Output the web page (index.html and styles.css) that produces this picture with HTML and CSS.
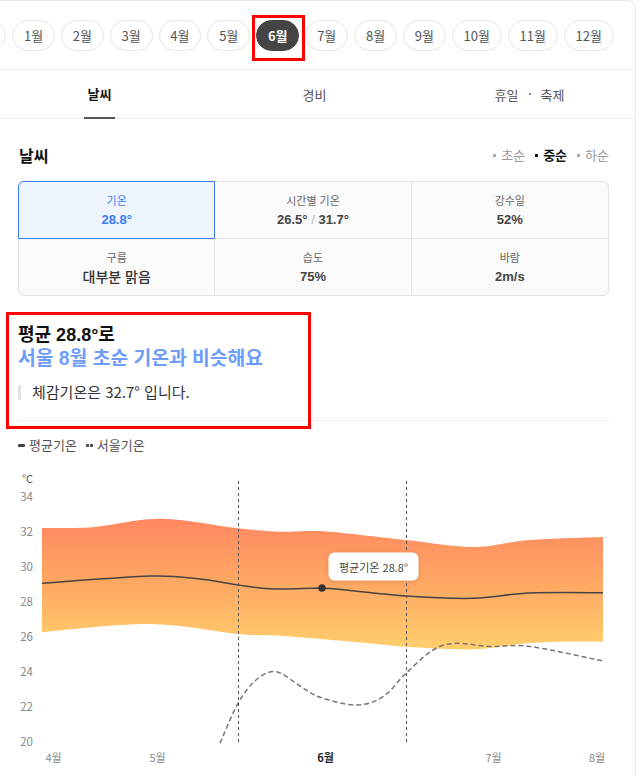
FILE: index.html
```html
<!DOCTYPE html>
<html lang="ko">
<head>
<meta charset="utf-8">
<title>날씨</title>
<link rel="stylesheet" href="styles.css">
</head>
<body>
<div class="page">
  <div class="monthbar">
    <div class="chips">
      <span class="chip chip-prev" aria-hidden="true"></span>
      <span class="chip">1월</span>
      <span class="chip">2월</span>
      <span class="chip">3월</span>
      <span class="chip">4월</span>
      <span class="chip">5월</span>
      <span class="chip active">6월</span>
      <span class="chip">7월</span>
      <span class="chip">8월</span>
      <span class="chip">9월</span>
      <span class="chip">10월</span>
      <span class="chip">11월</span>
      <span class="chip">12월</span>
    </div>
  </div>

  <nav class="tabs">
    <div class="tab"><span class="tab-label active">날씨</span></div>
    <div class="tab"><span class="tab-label">경비</span></div>
    <div class="tab"><span class="tab-label">휴일<span class="tab-dot"></span>축제</span></div>
  </nav>

  <section class="content">
    <div class="head-row">
      <h2 class="title">날씨</h2>
      <ul class="periods">
        <li class="period">초순</li>
        <li class="period on">중순</li>
        <li class="period">하순</li>
      </ul>
    </div>

    <div class="grid">
      <div class="cell selected"><span class="label">기온</span><span class="value">28.8°</span></div>
      <div class="cell"><span class="label">시간별 기온</span><span class="value">26.5° <span class="slash">/</span> 31.7°</span></div>
      <div class="cell tr"><span class="label">강수일</span><span class="value">52%</span></div>
      <div class="cell bl"><span class="label">구름</span><span class="value text">대부분 맑음</span></div>
      <div class="cell"><span class="label">습도</span><span class="value">75%</span></div>
      <div class="cell br"><span class="label">바람</span><span class="value">2m/s</span></div>
    </div>

    <div class="summary">
      <p class="sum-main">평균 28.8°로</p>
      <p class="sum-sub">서울 8월 초순 기온과 비슷해요</p>
      <p class="sum-note">체감기온은 32.7° 입니다.</p>
    </div>

    <div class="legend">
      <span class="legend-item"><span class="key key-solid"></span>평균기온</span>
      <span class="legend-item"><span class="key key-dash"><i></i><i></i></span>서울기온</span>
    </div>
  </section>

  <svg class="chart" width="635" height="310" viewBox="0 466 635 310" xmlns="http://www.w3.org/2000/svg">
    <defs>
      <linearGradient id="bandFill" x1="0" y1="518" x2="0" y2="650" gradientUnits="userSpaceOnUse">
        <stop offset="0" stop-color="#ff8761"/>
        <stop offset="0.5" stop-color="#ffa863"/>
        <stop offset="1" stop-color="#ffcf6c"/>
      </linearGradient>
      <filter id="tipShadow" x="-20%" y="-40%" width="140%" height="190%">
        <feDropShadow dx="0" dy="1" stdDeviation="2.2" flood-color="#000" flood-opacity="0.16"/>
      </filter>
    </defs>

    <text class="unit" x="33" y="478">°C</text>
    <g class="ylab">
      <text x="33" y="496">34</text>
      <text x="33" y="531">32</text>
      <text x="33" y="566">30</text>
      <text x="33" y="601">28</text>
      <text x="33" y="636">26</text>
      <text x="33" y="671">24</text>
      <text x="33" y="706">22</text>
      <text x="33" y="741">20</text>
    </g>

    <path class="band" d="M42,528 C50,527.9 72.8,528.3 90,527.5 C107.2,526.1 130,520.75 145,519.5 C160,518.25 164.5,518.5 180,520 C195.5,521.5 221.3,526.35 238,528.3 C254.7,530.25 266.3,531.25 280,531.7 C293.7,531.9 299,530.8 320,531 C341,532.4 380.5,537.3 406,540 C431.5,542.7 452.5,547 473,547 C493.5,547 507.3,541.7 529,540 C550.7,538.3 590.7,537.5 603,537 L603,641.7 C590.7,641.4 550.7,641.2 529,643.3 C507.3,644.6 493.5,648.7 473,649.3 C452.5,649.9 423.8,647.75 406,646.7 C388.2,645.65 385.3,644.7 366,643 C346.7,641.3 311.3,638 290,636.5 C268.7,635 261.3,636.1 238,634 C214.7,631.9 182.7,624.3 150,624 C117.3,623.7 60,630.7 42,632 Z"/>

    <path class="mean" d="M42,583.3 C60,582.1 123.7,576.7 150,576 C176.3,575.3 185.3,577.5 200,579 C214.7,580.5 225.5,583.3 238,585 C250.5,586.7 261,588.5 275,589 C289,589.5 300.2,588 322,588 C343.8,589.2 380.8,594.3 406,596 C431.2,597.7 452.5,598.8 473,598.3 C493.5,597.8 507.3,593.9 529,593 C550.7,592.1 590.7,592.7 603,592.7"/>

    <path class="seoul" d="M220,743.3 C223,736.6 232,713.85 238,703.3 C244,692.75 249.7,685.3 256,680 C262.3,674.7 268.7,670.7 276,671.7 C283.3,672.7 292.7,681.7 300,686 C307.3,690.3 310.7,694.1 320,697.3 C329.3,700.5 345.5,705.1 356,705 C366.5,704.9 374.7,702 383,696.7 C391.3,691.4 397.7,681.1 406,673.3 C414.3,665.5 424.7,655 433,650 C441.3,645 446.5,643.9 456,643.3 C465.5,642.7 477.7,646 490,646.5 C502.3,647 511.2,644.1 530,646.5 C548.8,648.9 590.8,658.6 603,661"/>

    <line class="vline" x1="238.5" y1="481" x2="238.5" y2="743"/>
    <line class="vline" x1="406.5" y1="481" x2="406.5" y2="743"/>

    <circle class="dot" cx="322" cy="588" r="3.8"/>

    <rect class="tip" x="328.5" y="552.5" width="90" height="28" rx="6" filter="url(#tipShadow)"/>
    <text class="tip-text" x="373.5" y="566.5">평균기온 28.8°</text>

    <g class="xlab">
      <text x="53.5" y="757">4월</text>
      <text x="157.5" y="757">5월</text>
      <text class="now" x="325.5" y="757">6월</text>
      <text x="493.5" y="757">7월</text>
      <text x="597" y="757">8월</text>
    </g>
  </svg>
</div>
</body>
</html>
```

FILE: styles.css
```css
*,
*::before,
*::after {
  box-sizing: border-box;
  margin: 0;
  padding: 0;
}

html, body {
  background: #fff;
}

body {
  margin: 0;
  width: 636px;
  overflow: hidden;
  font-family: "Noto Sans CJK KR", "Noto Sans", sans-serif;
  color: #333;
}

.page {
  border-top: 1px solid #e6e6e6;
  border-right: 1px solid #e6e6e6;
  border-top-right-radius: 9px;
}

/* month chips */
.monthbar {
  height: 69px;
  border-bottom: 1px solid #efefef;
  display: flex;
  align-items: center;
  overflow: hidden;
}

.chips {
  display: flex;
  gap: 6px;
  margin-left: -43.6px;
}

.chip {
  flex: none;
  height: 31px;
  padding: 0 10.8px;
  border: 1px solid #e4e4e4;
  border-radius: 16px;
  font-size: 13px;
  line-height: 29px;
  color: #555;
  white-space: nowrap;
}

.chip-prev {
  width: 49.8px;
}

.chip.active {
  position: relative;
  background: #444;
  border-color: #444;
  color: #fff;
  font-weight: 700;
}

.chip.active::after {
  content: "";
  position: absolute;
  left: -5px;
  top: -6px;
  width: 53px;
  height: 46px;
  border: 3px solid #ff0000;
}

/* tabs */
.tabs {
  display: grid;
  grid-template-columns: repeat(3, 1fr);
  margin: 0 -2px 0 -8px;
  height: 49px;
  border-bottom: 1px solid #eeeeee;
}

.tab {
  display: flex;
  justify-content: center;
}

.tab-label {
  display: flex;
  align-items: center;
  padding: 0 4px;
  font-size: 13px;
  color: #555;
}

.tab-label.active {
  color: #111;
  font-weight: 700;
  border-bottom: 2px solid #555;
  margin-bottom: -1px;
}

.tab-dot {
  width: 2px;
  height: 2px;
  border-radius: 1px;
  background: #666;
  margin: 0 10px;
}

/* content */
.content {
  padding: 0 26px 0 18px;
}

.head-row {
  display: flex;
  justify-content: space-between;
  align-items: center;
  padding-top: 24px;
  height: 48px;
}

.title {
  font-size: 16px;
  line-height: 24px;
  font-weight: 700;
  color: #111;
  padding-left: 1px;
}

.periods {
  list-style: none;
  display: flex;
  gap: 10px;
  font-size: 13px;
  line-height: 20px;
  color: #999;
}

.period {
  display: flex;
  align-items: center;
}

.period::before {
  content: "";
  width: 3px;
  height: 3px;
  background: #aaa;
  margin-right: 5px;
}

.period.on {
  color: #111;
  font-weight: 700;
}

.period.on::before {
  background: #111;
}

/* stats grid */
.grid {
  margin-top: 14px;
  display: grid;
  grid-template-columns: repeat(3, 1fr);
  border: 1px solid #e3e3e3;
  border-radius: 6px;
  background: #fafafa;
}

.cell {
  position: relative;
  height: 57px;
  display: flex;
  flex-direction: column;
  align-items: center;
  justify-content: center;
  gap: 3px;
  border-right: 1px solid #e6e6e6;
  border-bottom: 1px solid #e6e6e6;
}

.cell:nth-child(3n) {
  border-right: none;
}

.cell:nth-child(n+4) {
  border-bottom: none;
  height: 56px;
}

.cell.selected {
  background: #eef5ff;
  border-top-left-radius: 5px;
}

.cell.selected::after {
  content: "";
  position: absolute;
  left: -1px;
  top: -1px;
  right: -1px;
  bottom: -1px;
  border: 1px solid #3b7cf6;
  border-top-left-radius: 6px;
}

.label {
  font-size: 11px;
  line-height: 16px;
  color: #666;
}

.value {
  font-family: "Liberation Sans", "Noto Sans CJK KR", sans-serif;
  font-size: 13px;
  line-height: 18px;
  font-weight: 700;
  color: #444;
}

.value.text {
  font-size: 14px;
  font-weight: 500;
  color: #333;
}

.slash {
  color: #bbb;
  font-weight: 400;
}

.cell.selected .label,
.cell.selected .value {
  color: #3b7cf6;
}

/* summary */
.summary {
  position: relative;
  margin-top: 27px;
  padding-bottom: 18px;
  border-bottom: 1px solid #eeeeee;
}

.summary::after {
  content: "";
  position: absolute;
  left: -12px;
  top: -11px;
  width: 305px;
  height: 117px;
  border: 3px solid #ff0000;
}

.sum-main,
.sum-sub {
  font-family: "Liberation Sans", "Noto Sans CJK KR", sans-serif;
  font-size: 18px;
  line-height: 24px;
  font-weight: 700;
  color: #111;
}

.sum-sub {
  font-size: 19.3px;
  color: #6d9cfd;
}

.sum-note {
  position: relative;
  margin-top: 11px;
  padding-left: 14px;
  font-size: 15px;
  line-height: 20px;
  color: #333;
}

.sum-note::before {
  content: "";
  position: absolute;
  left: 0;
  top: 3px;
  width: 3px;
  height: 15px;
  background: #e2e2e2;
}

/* legend */
.legend {
  margin-top: 15px;
  display: flex;
  gap: 9px;
  font-size: 13px;
  line-height: 18px;
  color: #555;
}

.legend-item {
  display: flex;
  align-items: center;
}

.key {
  margin-right: 4px;
}

.key-solid {
  width: 7px;
  height: 3px;
  border-radius: 1px;
  background: #444;
}

.key-dash {
  display: flex;
  gap: 1px;
}

.key-dash i {
  width: 3px;
  height: 3px;
  background: #555;
}

/* chart */
.chart {
  display: block;
  margin-top: 12px;
  font-family: "Noto Sans CJK KR", "Noto Sans", sans-serif;
}

.unit {
  font-size: 11px;
  fill: #555;
  text-anchor: end;
  dominant-baseline: central;
}

.ylab text {
  font-size: 11.5px;
  fill: #888;
  text-anchor: end;
  dominant-baseline: central;
}

.band {
  fill: url(#bandFill);
}

.mean {
  fill: none;
  stroke: #444;
  stroke-width: 1.5;
}

.seoul {
  fill: none;
  stroke: #777;
  stroke-width: 1.5;
  stroke-dasharray: 5 3;
}

.vline {
  stroke: #555;
  stroke-width: 1;
  stroke-dasharray: 3 3;
}

.dot {
  fill: #333;
}

.tip {
  fill: #fff;
}

.tip-text {
  font-size: 11px;
  fill: #444;
  text-anchor: middle;
  dominant-baseline: central;
}

.xlab text {
  font-size: 11px;
  fill: #888;
  text-anchor: middle;
  dominant-baseline: central;
}

.xlab text.now {
  fill: #222;
  font-weight: 700;
}
```
